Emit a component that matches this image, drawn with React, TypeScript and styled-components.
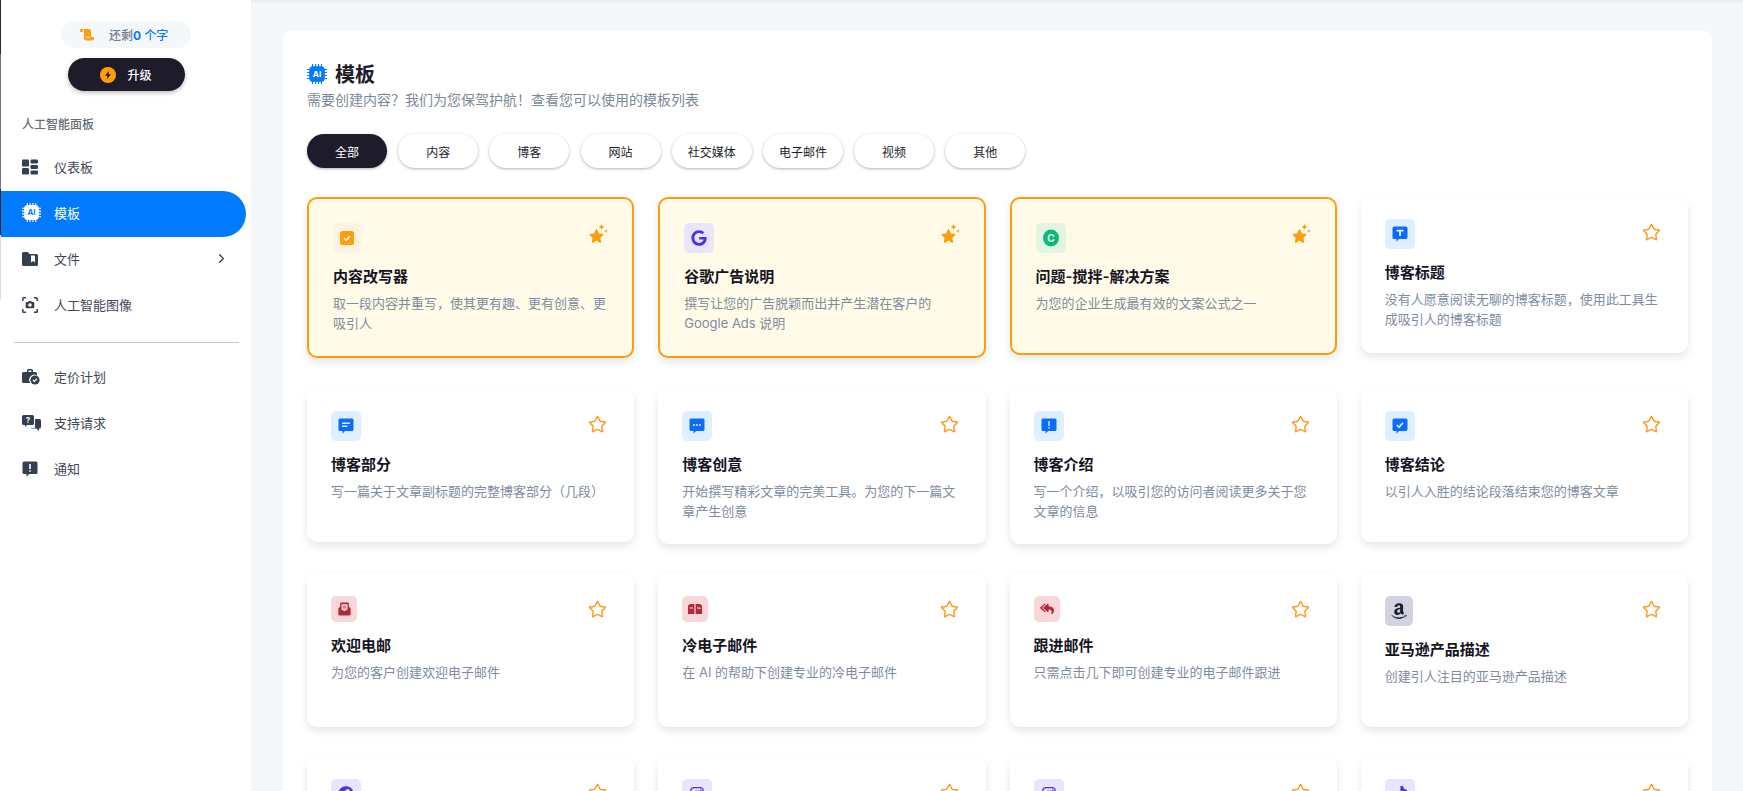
import React from 'react';
import styled, { createGlobalStyle } from 'styled-components';
import { ChevronRight, Star } from 'lucide-react';
import { FaAmazon, FaFacebook, FaGoogle, FaInstagram, FaReplyAll, FaTiktok } from 'react-icons/fa';

const GlobalStyle = createGlobalStyle`
  * { box-sizing: border-box; }
  html, body { margin: 0; height: 100%; overflow: hidden; }
  body {
    font-family: Inter, "Noto Sans CJK SC", "Noto Sans", sans-serif;
    background: #f5f8fb;
  }
`;

const BLUE = '#007bff';
const NAVY = '#343f52';
const ORANGE = '#ff9d0a';

const DashboardIcon = () => (
  <svg width="16" height="16" viewBox="0 0 16 16" fill={NAVY}>
    <rect x="0" y="0.5" width="7" height="7" rx="1.2" />
    <rect x="0" y="9" width="7" height="6.5" rx="1.2" />
    <rect x="8.5" y="0.5" width="7.5" height="4" rx="1.2" />
    <rect x="8.5" y="6" width="7.5" height="4" rx="1.2" />
    <rect x="8.5" y="11.5" width="7.5" height="4" rx="1.2" />
  </svg>
);

const ChipIcon = ({ size, bg, fg }: { size: number; bg: string; fg: string }) => (
  <svg width={size} height={size} viewBox="0 0 18 18">
    <g stroke={bg} strokeWidth="1">
      <path d="M5 0v18M7.7 0v18M10.3 0v18M13 0v18M0 5h18M0 7.7h18M0 10.3h18M0 13h18" />
    </g>
    <rect x="2" y="2" width="14" height="14" rx="3.5" fill={bg} />
    <text x="9" y="11.6" textAnchor="middle" fontSize="7.4" fontWeight="700" fontFamily="Inter, sans-serif" fill={fg}>
      AI
    </text>
  </svg>
);

const FolderIcon = () => (
  <svg width="16" height="16" viewBox="0 0 16 16" fill={NAVY}>
    <path d="M1.5 1h4.2l1.8 2h7a1.5 1.5 0 0 1 1.5 1.5v9a1.5 1.5 0 0 1-1.5 1.5h-13A1.5 1.5 0 0 1 0 13.5v-11A1.5 1.5 0 0 1 1.5 1z" />
    <path d="M9 4.5h4v7l-2-1.6-2 1.6z" fill="#fff" />
  </svg>
);

const ScanIcon = () => (
  <svg width="16" height="16" viewBox="0 0 16 16" fill="none">
    <path d="M4 .8H1.6a.8.8 0 0 0-.8.8V4M12 .8h2.4a.8.8 0 0 1 .8.8V4M4 15.2H1.6a.8.8 0 0 1-.8-.8V12M12 15.2h2.4a.8.8 0 0 0 .8-.8V12" stroke={NAVY} strokeWidth="1.5" />
    <path d="M4.5 5h1.6l.8-1h2.2l.8 1h1.6a.8.8 0 0 1 .8.8v4.6a.8.8 0 0 1-.8.8h-7a.8.8 0 0 1-.8-.8V5.800a.8.8 0 0 1 .8-.8z" fill={NAVY} />
    <circle cx="8" cy="8" r="1.8" fill="#fff" />
  </svg>
);

const PricingIcon = () => (
  <svg width="18" height="16" viewBox="0 0 18 16" fill={NAVY}>
    <path d="M5 3V1.500A1.500 1.500 0 0 1 6.500 0h3A1.500 1.500 0 0 1 11 1.500V3h2.500A1.500 1.500 0 0 1 15 4.500v2a5 5 0 0 0-6.500 7.500H1.500A1.500 1.500 0 0 1 0 12.500v-8A1.500 1.500 0 0 1 1.500 3zM6.500 1.500V3h3V1.500z" />
    <circle cx="13" cy="11" r="4.600" />
    <path d="M11 11l1.500 1.500 2.500-2.800" stroke="#fff" strokeWidth="1.200" fill="none" />
  </svg>
);

const SupportIcon = () => (
  <svg width="20" height="16" viewBox="0 0 20 16" fill={NAVY}>
    <path d="M1.500 0h9A1.500 1.500 0 0 1 12 1.500v7A1.500 1.500 0 0 1 10.500 10H5l-2 2v-2H1.500A1.500 1.500 0 0 1 0 8.500v-7A1.500 1.500 0 0 1 1.500 0z" />
    <path d="M13 4h4.500A1.500 1.500 0 0 1 19 5.500V12a1.500 1.500 0 0 1-1.500 1.500h-.5V16l-2.500-2.500H9.500a1.500 1.500 0 0 1-1-.5H12a1 1 0 0 0 1-1z" />
    <text x="6" y="8" textAnchor="middle" fontSize="8" fontWeight="700" fontFamily="Inter, sans-serif" fill="#fff">?</text>
  </svg>
);

const BubbleShape = ({ color }: { color: string }) => (
  <path d="M2 .5h12A1.500 1.500 0 0 1 15.500 2v9.500A1.500 1.500 0 0 1 14 13H7l-2.500 2.800V13H2A1.500 1.500 0 0 1 .5 11.500V2A1.500 1.500 0 0 1 2 .5z" fill={color} />
);

const NoticeIcon = () => (
  <svg width="16" height="16" viewBox="0 0 16 16">
    <BubbleShape color={NAVY} />
    <path d="M7.200 3h1.600v5H7.200zM7.200 9.200h1.600v1.600H7.200z" fill="#fff" />
  </svg>
);

const ScrollIcon = () => (
  <svg width="14" height="12" viewBox="0 0 14 12" fill={ORANGE}>
    <rect x="0" y="0" width="3" height="3" rx="1.200" />
    <path d="M3 0h6a2 2 0 0 1 2 2v6h3v1.500a2 2 0 0 1-2 2H6.500A2.500 2.500 0 0 1 4 9V2.500A2.500 2.500 0 0 0 3 0z" />
    <path d="M6 8.200h4" stroke="#f5f8fb" strokeWidth="1" />
  </svg>
);

const BoltIcon = () => (
  <svg width="16" height="16" viewBox="0 0 16 16">
    <circle cx="8" cy="8" r="8" fill={ORANGE} />
    <path d="M9 3.800L5 8.800h2.500L6.900 12.200l4-5H8.400z" fill="#1e1c2b" />
  </svg>
);

const SparkStar = () => (
  <svg width="19" height="20" viewBox="0 0 19 20" fill={ORANGE}>
    <path d="M7.500 5.500l2.100 4.300 4.700.7-3.400 3.300.8 4.700-4.200-2.200-4.200 2.200.8-4.700L.7 10.500l4.700-.7z" stroke={ORANGE} strokeLinejoin="round" />
    <path d="M12.500 0l.9 2.100 2.100.9-2.100.9-.9 2.100-.9-2.100L9.500 3l2.100-.9z" />
    <path d="M17 5l.6 1.400 1.400.6-1.400.6L17 9l-.6-1.400L15 7l1.400-.6z" />
  </svg>
);

const CheckBadge = () => (
  <svg width="14" height="14" viewBox="0 0 14 14">
    <rect width="14" height="14" rx="2.500" fill={ORANGE} />
    <path d="M4 7.200l2.200 2.100L10 5.200" stroke="#fff5e0" strokeWidth="1.700" fill="none" />
  </svg>
);

const GrammarlyIcon = () => (
  <svg width="16" height="18" viewBox="0 0 16 18">
    <ellipse cx="8" cy="9" rx="8" ry="8.500" fill="#0fb77f" />
    <text x="8" y="12.500" textAnchor="middle" fontSize="10" fontWeight="700" fontFamily="Inter, sans-serif" fill="#e2f5e0">C</text>
  </svg>
);

const BlogBubble = ({ kind }: { kind: string }) => (
  <svg width="16" height="16" viewBox="0 0 16 16">
    <BubbleShape color="#0a6cff" />
    {kind === 'title' && <path d="M4.500 3.800h7v1.700H8.900V10H7.100V5.500H4.500z" fill="#e0efff" />}
    {kind === 'section' && <path d="M4 4.500h8v1.500H4zM4 7.500h5.500V9H4z" fill="#e0efff" />}
    {kind === 'idea' && (
      <g fill="#e0efff">
        <circle cx="5" cy="7" r="1" />
        <circle cx="8" cy="7" r="1" />
        <circle cx="11" cy="7" r="1" />
      </g>
    )}
    {kind === 'intro' && <path d="M7.300 3h1.400v5H7.300zM7.300 9.100h1.400v1.500H7.300z" fill="#e0efff" />}
    {kind === 'end' && <path d="M4.800 7l2.200 2.200 4-4.400" stroke="#e0efff" strokeWidth="1.700" fill="none" />}
  </svg>
);

const WelcomeMailIcon = () => (
  <svg width="13" height="14" viewBox="0 0 14 16" fill="#b02a37">
    <path d="M0 7l2-1.500V2a1.500 1.500 0 0 1 1.500-1.500h7A1.500 1.500 0 0 1 12 2v3.500L14 7v7a1.500 1.500 0 0 1-1.500 1.500h-11A1.500 1.500 0 0 1 0 14z" />
    <path d="M3.500 2.500h7v6L7 10.500l-3.500-2z" fill="#f8d7da" />
    <path d="M5 4.200h4v1H5zM5 6.200h4v1H5z" />
  </svg>
);

const ColdMailIcon = () => (
  <svg width="14" height="10" viewBox="0 0 14 10" fill="#b02a37">
    <path d="M0 3a3 3 0 0 1 3-3h3.400v10H0zM7.600 0H11a3 3 0 0 1 3 3v7H7.600z" />
    <path d="M1.500 3.500h3.500v1H1.500zM9 3.500h3.500v1.800h-1v-.8H9z" fill="#f8d7da" />
  </svg>
);

type CardData = {
  title?: string;
  desc?: string;
  icon: React.ReactNode;
  bg: string;
  boxW: number;
  boxH: number;
  height: number;
  featured?: boolean;
};

const blueBox = { bg: '#e0efff', boxW: 30, boxH: 30 };
const redBox = { bg: '#f8d7da', boxW: 26, boxH: 26, height: 154 };
const violetBox = { bg: '#e9e5ff', boxW: 30, boxH: 30, height: 154 };

const cards: CardData[] = [
  { title: '内容改写器', desc: '取一段内容并重写\uFF0C使其更有趣、更有创意、更吸引人', icon: <CheckBadge />, bg: '#fff3e0', boxW: 28, boxH: 30, height: 161, featured: true },
  { title: '谷歌广告说明', desc: '撰写让您的广告脱颖而出并产生潜在客户的 Google Ads 说明', icon: <FaGoogle size={16} color="#4f2fe8" />, bg: '#e9e5ff', boxW: 30, boxH: 30, height: 161, featured: true },
  { title: '问题-搅拌-解决方案', desc: '为您的企业生成最有效的文案公式之一', icon: <GrammarlyIcon />, bg: '#e2f5e0', boxW: 30, boxH: 30, height: 158, featured: true },
  { title: '博客标题', desc: '没有人愿意阅读无聊的博客标题\uFF0C使用此工具生成吸引人的博客标题', icon: <BlogBubble kind="title" />, ...blueBox, height: 157 },
  { title: '博客部分', desc: '写一篇关于文章副标题的完整博客部分\uFF08几段\uFF09', icon: <BlogBubble kind="section" />, ...blueBox, height: 154 },
  { title: '博客创意', desc: '开始撰写精彩文章的完美工具。为您的下一篇文章产生创意', icon: <BlogBubble kind="idea" />, ...blueBox, height: 156 },
  { title: '博客介绍', desc: '写一个介绍\uFF0C以吸引您的访问者阅读更多关于您文章的信息', icon: <BlogBubble kind="intro" />, ...blueBox, height: 156 },
  { title: '博客结论', desc: '以引人入胜的结论段落结束您的博客文章', icon: <BlogBubble kind="end" />, ...blueBox, height: 154 },
  { title: '欢迎电邮', desc: '为您的客户创建欢迎电子邮件', icon: <WelcomeMailIcon />, ...redBox },
  { title: '冷电子邮件', desc: '在 AI 的帮助下创建专业的冷电子邮件', icon: <ColdMailIcon />, ...redBox },
  { title: '跟进邮件', desc: '只需点击几下即可创建专业的电子邮件跟进', icon: <FaReplyAll size={14} color="#b02a37" />, ...redBox },
  { title: '亚马逊产品描述', desc: '创建引人注目的亚马逊产品描述', icon: <FaAmazon size={18} color="#1e1c2b" />, bg: '#d2d3e0', boxW: 28, boxH: 30, height: 154 },
  { icon: <FaFacebook size={16} color="#4f2fe8" />, ...violetBox },
  { icon: <FaInstagram size={16} color="#4f2fe8" />, ...violetBox },
  { icon: <FaInstagram size={16} color="#4f2fe8" />, ...violetBox },
  { icon: <FaTiktok size={16} color="#4f2fe8" />, ...violetBox },
];

const filters = ['全部', '内容', '博客', '网站', '社交媒体', '电子邮件', '视频', '其他'];
const subtitle = '需要创建内容\uFF1F我们为您保驾护航\uFF01查看您可以使用的模板列表';

const App = () => {
  return (
    <Page>
      <GlobalStyle />
      <Sidebar>
        <WordChip>
          <ScrollIcon />
          <WordText>
            还剩<strong>0</strong> <span>个字</span>
          </WordText>
        </WordChip>
        <UpgradeButton>
          <BoltIcon />
          升级
        </UpgradeButton>
        <NavLabel>人工智能面板</NavLabel>
        <NavItem>
          <NavIcon><DashboardIcon /></NavIcon>
          仪表板
        </NavItem>
        <NavItem $active>
          <NavIcon><ChipIcon size={19} bg="#fff" fg={BLUE} /></NavIcon>
          模板
        </NavItem>
        <NavItem>
          <NavIcon><FolderIcon /></NavIcon>
          文件
          <NavArrow><ChevronRight size={15} color={NAVY} /></NavArrow>
        </NavItem>
        <NavItem>
          <NavIcon><ScanIcon /></NavIcon>
          人工智能图像
        </NavItem>
        <Divider />
        <NavItem>
          <NavIcon><PricingIcon /></NavIcon>
          定价计划
        </NavItem>
        <NavItem>
          <NavIcon><SupportIcon /></NavIcon>
          支持请求
        </NavItem>
        <NavItem>
          <NavIcon><NoticeIcon /></NavIcon>
          通知
        </NavItem>
      </Sidebar>
      <Main>
        <Panel>
          <TitleRow>
            <ChipIcon size={20} bg={BLUE} fg="#fff" />
            <PageTitle>模板</PageTitle>
          </TitleRow>
          <PageSub>{subtitle}</PageSub>
          <FilterRow>
            {filters.map((name, i) => (
              <FilterPill key={name} $active={i === 0}>{name}</FilterPill>
            ))}
          </FilterRow>
          <CardGrid>
            {cards.map((card, i) => (
              <Card key={i} $featured={card.featured} $height={card.height}>
                <CardHead>
                  <IconBox $bg={card.bg} $w={card.boxW} $h={card.boxH}>{card.icon}</IconBox>
                  <StarSlot $featured={card.featured}>
                    {card.featured ? <SparkStar /> : <Star size={19} color="#ff9a1f" strokeWidth={1.8} />}
                  </StarSlot>
                </CardHead>
                {card.title && <CardTitle>{card.title}</CardTitle>}
                {card.desc && <CardDesc>{card.desc}</CardDesc>}
              </Card>
            ))}
          </CardGrid>
        </Panel>
      </Main>
    </Page>
  );
};

export default App;

const Page = styled.div`
  display: flex;
  height: 100vh;
  overflow: hidden;
`;

const Sidebar = styled.aside`
  width: 251px;
  flex: none;
  display: flex;
  flex-direction: column;
  background: #fff;
  padding: 21px 5px 0 0;
  border-left: 1px solid;
  border-image: linear-gradient(#2a2a2a 0 55px, #777 55px 190px, #2a2a2a 190px 235px, #ddd 235px 300px, #fff 300px) 1;
`;

const WordChip = styled.div`
  align-self: center;
  width: 130px;
  height: 27px;
  margin-left: 5px;
  border-radius: 14px;
  background: #f5f8fb;
  display: flex;
  align-items: center;
  padding-left: 19px;
  gap: 15px;
`;

const WordText = styled.span`
  font-size: 12px;
  color: #737c8c;
  font-weight: 500;

  strong {
    color: ${BLUE};
    font-weight: 700;
  }

  span {
    color: ${BLUE};
  }
`;

const UpgradeButton = styled.button`
  align-self: center;
  width: 117px;
  height: 33px;
  margin: 10px 0 0 5px;
  border: 0;
  border-radius: 17px;
  background: #1e1c2b;
  color: #fff;
  font: 500 12px Inter, "Noto Sans CJK SC", sans-serif;
  display: flex;
  align-items: center;
  justify-content: center;
  gap: 11px;
  box-shadow: 0 2px 4px rgba(0, 0, 0, 0.25);
`;

const NavLabel = styled.div`
  margin: 25px 0 11px 21px;
  font-size: 12px;
  line-height: 18px;
  font-weight: 500;
  color: #666b75;
`;

const NavItem = styled.div<{ $active?: boolean }>`
  height: 46px;
  display: flex;
  align-items: center;
  padding: 0 0 3px 21px;
  font-size: 13px;
  color: ${props => (props.$active ? '#fff' : '#3f4756')};
  background: ${props => (props.$active ? BLUE : 'transparent')};
  border-radius: 0 23px 23px 0;
`;

const NavIcon = styled.span`
  width: 32px;
  display: flex;
  align-items: center;
`;

const NavArrow = styled.span`
  margin-left: auto;
  margin-right: 17px;
  display: flex;
`;

const Divider = styled.hr`
  width: 225px;
  height: 1px;
  margin: 13px 0 12px 13px;
  border: 0;
  background: #c9c9c9;
`;

const Main = styled.main`
  flex: 1;
  min-width: 0;
  padding: 31px 31px 0 32px;
  box-shadow: inset 0 4px 4px -3px rgba(0, 0, 0, 0.08);
`;

const Panel = styled.section`
  height: 100%;
  background: #fff;
  border-radius: 8px 8px 0 0;
  padding: 29px 24px 0;
  overflow: hidden;
`;

const TitleRow = styled.div`
  height: 28px;
  display: flex;
  align-items: center;
  gap: 8px;
`;

const PageTitle = styled.h1`
  margin: 1px 0 0;
  font-size: 20px;
  line-height: 28px;
  font-weight: 700;
  color: #1e1c2b;
`;

const PageSub = styled.p`
  margin: 2px 0 0;
  font-size: 14px;
  line-height: 20px;
  color: #7d8898;
`;

const FilterRow = styled.div`
  display: flex;
  gap: 11.2px;
  margin-top: 24px;
`;

const FilterPill = styled.button<{ $active?: boolean }>`
  width: 80px;
  height: 34px;
  padding: 0;
  border: 0;
  border-radius: 17px;
  font: 400 12px Inter, "Noto Sans CJK SC", sans-serif;
  color: ${props => (props.$active ? '#fff' : '#1e1c2b')};
  background: ${props => (props.$active ? '#1e1c2b' : '#fff')};
  box-shadow: 0 1px 3px rgba(0, 0, 0, 0.3);
`;

const CardGrid = styled.div`
  display: grid;
  grid-template-columns: repeat(4, 1fr);
  column-gap: 24px;
  row-gap: 29px;
  align-items: start;
  margin-top: 28px;
`;

const Card = styled.article<{ $featured?: boolean; $height: number }>`
  height: ${props => props.$height}px;
  margin: ${props => (props.$featured ? '1px 0' : '0')};
  padding: ${props => (props.$featured ? '24px 24px 0' : '23px 24px 0')};
  border-radius: 10px;
  border: ${props => (props.$featured ? '2px solid #ff9c0a' : '0')};
  background: ${props => (props.$featured ? '#fffbe8' : '#fff')};
  box-shadow: 0 4px 8px rgba(0, 0, 0, 0.1);
`;

const CardHead = styled.div`
  display: flex;
  justify-content: space-between;
  align-items: flex-start;
`;

const IconBox = styled.div<{ $bg: string; $w: number; $h: number }>`
  width: ${props => props.$w}px;
  height: ${props => props.$h}px;
  border-radius: 5px;
  background: ${props => props.$bg};
  display: flex;
  align-items: center;
  justify-content: center;
`;

const StarSlot = styled.div<{ $featured?: boolean }>`
  padding: ${props => (props.$featured ? '1px 0 0' : '4px 3px 0 0')};
  display: flex;
`;

const CardTitle = styled.h3`
  margin: 13px 0 0;
  font-size: 15px;
  line-height: 22px;
  font-weight: 600;
  color: #15141f;
`;

const CardDesc = styled.p`
  margin: 6px 0 0;
  font-size: 13px;
  line-height: 19.500px;
  color: #808b9f;
`;
